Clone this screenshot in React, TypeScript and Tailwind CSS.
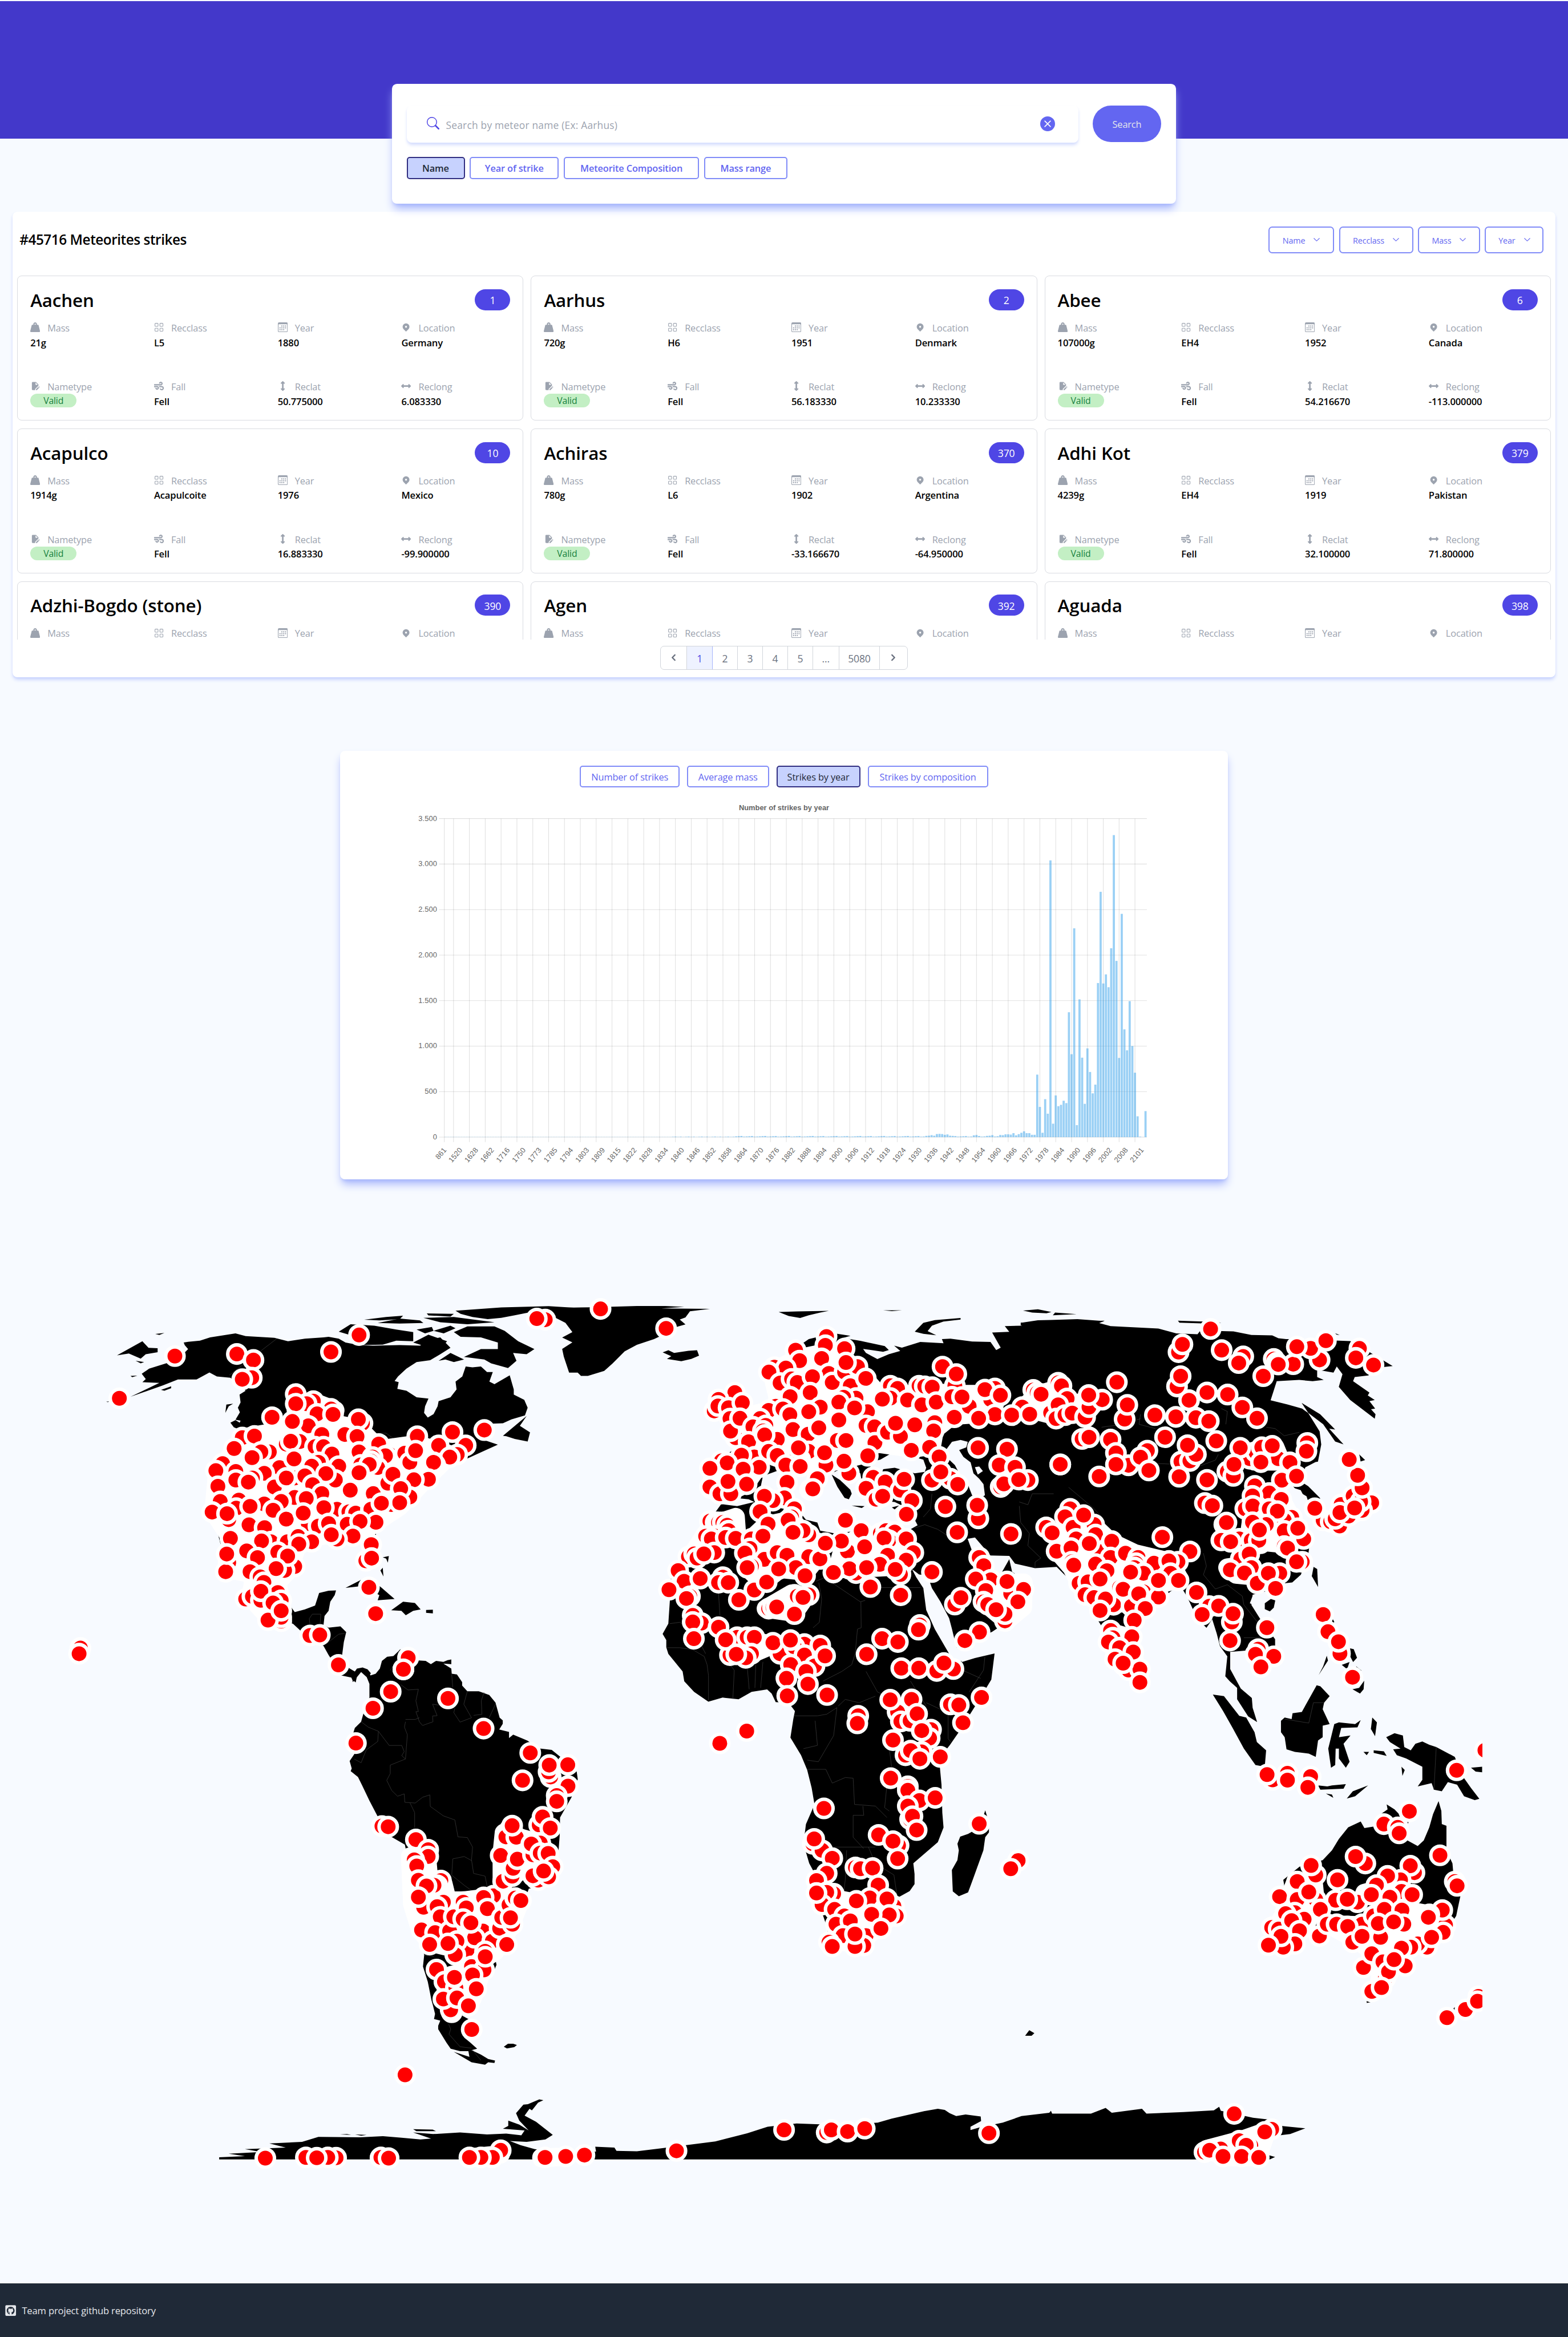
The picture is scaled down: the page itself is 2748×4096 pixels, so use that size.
import React from "react";
import { BsCalendar3, BsGrid, BsSearch, BsXCircleFill } from "react-icons/bs";
import { FaArrowsAltH, FaArrowsAltV, FaGithubSquare, FaWeightHanging, FaWind } from "react-icons/fa";
import { HiChevronLeft, HiChevronRight, HiLocationMarker } from "react-icons/hi";
import { MdEditDocument } from "react-icons/md";

// name, id, mass, class, year, country, latitude, longitude
const STRIKES: string[][] = [
  ["Aachen", "1", "21g", "L5", "1880", "Germany", "50.775000", "6.083330"],
  ["Aarhus", "2", "720g", "H6", "1951", "Denmark", "56.183330", "10.233330"],
  ["Abee", "6", "107000g", "EH4", "1952", "Canada", "54.216670", "-113.000000"],
  ["Acapulco", "10", "1914g", "Acapulcoite", "1976", "Mexico", "16.883330", "-99.900000"],
  ["Achiras", "370", "780g", "L6", "1902", "Argentina", "-33.166670", "-64.950000"],
  ["Adhi Kot", "379", "4239g", "EH4", "1919", "Pakistan", "32.100000", "71.800000"],
  ["Adzhi-Bogdo (stone)", "390"],
  ["Agen", "392"],
  ["Aguada", "398"],
];

function Field({ icon, label, children }: { icon: React.ReactNode; label: string; children?: React.ReactNode }) {
  return (
    <div className="h-[103px]">
      <div className="flex h-[25.8px] items-center text-[16.4px] text-[#9ca3af]">
        <span className="-mt-[3px] flex w-[30px] text-[17.2px]">{icon}</span>
        {label}
      </div>
      {children && (
        <div className="flex h-[25.8px] items-center text-[16.6px] font-semibold text-black">{children}</div>
      )}
    </div>
  );
}

function StrikeCard({ strike }: { strike: string[] }) {
  const [name, id, mass, recclass, year, country, lat, long] = strike;
  return (
    <div className="h-[254px] overflow-hidden rounded-[8px] border border-[#d9dbe1] bg-white px-[22px] pt-[21.5px]">
      <div className="flex items-start justify-between">
        <h2 className="text-[31.4px] font-semibold leading-[40px] tracking-[-0.005em] text-black">{name}</h2>
        <span className="mt-px flex h-[37px] w-[62px] items-center justify-center rounded-full bg-[#4f46e5] pt-[2px] text-[17.6px] text-white">
          {id}
        </span>
      </div>
      <div className="mt-[16.5px] grid grid-cols-4 gap-x-[25.8px]">
        <Field icon={<FaWeightHanging />} label="Mass">{mass}</Field>
        <Field icon={<BsGrid />} label="Recclass">{recclass}</Field>
        <Field icon={<BsCalendar3 />} label="Year">{year}</Field>
        <Field icon={<HiLocationMarker />} label="Location">{country}</Field>
        {mass && (
          <>
            <Field icon={<MdEditDocument />} label="Nametype">
              <span className="-mt-[4px] flex h-[23.6px] w-[81px] items-center justify-center rounded-full bg-[#c3efc4] pt-[2px] text-[15.8px] font-medium text-[#15803d]">
                Valid
              </span>
            </Field>
            <Field icon={<FaWind />} label="Fall">Fell</Field>
            <Field icon={<FaArrowsAltV />} label="Reclat">{lat}</Field>
            <Field icon={<FaArrowsAltH />} label="Reclong">{long}</Field>
          </>
        )}
      </div>
    </div>
  );
}

function SortButton({ label, className }: { label: string; className: string }) {
  return (
    <button
      className={`flex h-[47px] items-center justify-center gap-[15px] rounded-[6.5px] border-2 border-[#818cf8] pt-[2px] text-[14.4px] text-[#6366f1] ${className}`}
    >
      {label}
      <svg className="-mt-[2px] h-[6px] w-[11px]" viewBox="0 0 11 6" fill="none" stroke="currentColor" strokeWidth="1.1">
        <path d="M0.5 0.5 5.5 5.3 10.5 0.5" />
      </svg>
    </button>
  );
}

/* ------------------------------ chart ------------------------------ */

const PLOT = { left: 1088, right: 2808.7, top: 2004.8, bottom: 2785.2 };
const BAR_COUNT = 266;
const BAR_STEP = (PLOT.right - PLOT.left) / BAR_COUNT;

const RECENT = [
  10, 24, 22, 31, 31, 28, 44, 20, 33, 48, 64, 44, 44, 26, 26, 687, 332, 48, 417, 258, 3040, 148, 458, 340, 355, 400,
  374, 1372, 911, 2294, 132, 1514, 873, 366, 975, 716, 481, 577, 1693, 2695, 1688, 1788, 1647, 2075, 3318, 1936, 870,
  2453, 1184, 954, 1494, 1001, 708, 229, 5, 1, 286,
];
const BUMP: Record<number, number> = {
  182: 14, 183: 16, 184: 22, 185: 16, 186: 34, 187: 36, 188: 34, 189: 26, 190: 30, 191: 16, 192: 14, 193: 12,
  200: 20, 201: 24, 205: 14, 206: 16, 207: 22,
};
const COUNTS = Array.from({ length: BAR_COUNT }, (_, i) => {
  const recent = i - (BAR_COUNT - RECENT.length);
  if (recent >= 0) return RECENT[recent];
  if (BUMP[i]) return BUMP[i];
  if (i < 85) return 2;
  return i < 110 ? 2 + ((i * 7) % 5) : 5 + ((i * 11) % 9);
});

const YEARS = [
  861, 1520, 1628, 1662, 1716, 1750, 1773, 1785, 1794, 1803, 1809, 1815,
  ...Array.from({ length: 32 }, (_, i) => 1822 + i * 6),
  2101,
];
const Y_TICKS = ["0", "500", "1.000", "1.500", "2.000", "2.500", "3.000", "3.500"];

function StrikesChart() {
  const yOf = (v: number) => PLOT.bottom - (v / 3500) * (PLOT.bottom - PLOT.top);
  const tickOf = (i: number) => PLOT.left + BAR_STEP * (6 * i + 0.5);
  return (
    <svg className="mt-[18.4px] h-[666px] w-[1288px]" viewBox="1020 1955 1800 930" preserveAspectRatio="xMinYMin meet">
      <text x="1920" y="1984.5" textAnchor="middle" fontSize="18" fontWeight="700" fill="#666" letterSpacing="0" fontFamily="Liberation Sans, sans-serif">
        Number of strikes by year
      </text>
      <g stroke="#000" strokeOpacity="0.12" strokeWidth="1.5">
        {Y_TICKS.map((t, i) => (
          <line key={t} x1={PLOT.left - 13} x2={PLOT.right} y1={yOf(i * 500)} y2={yOf(i * 500)} />
        ))}
        <line x1={PLOT.left} x2={PLOT.left} y1={PLOT.top} y2={PLOT.bottom + 12} />
        {YEARS.slice(1).map((year, i) => {
          const x = (tickOf(i) + tickOf(i + 1)) / 2;
          return <line key={year} x1={x} x2={x} y1={PLOT.top} y2={PLOT.bottom + 12} />;
        })}
      </g>
      <g fill="rgb(54,162,235)" fillOpacity="0.5">
        {COUNTS.map((v, i) => (
          <rect key={i} x={PLOT.left + BAR_STEP * i + 0.6} width={BAR_STEP - 1.2} y={yOf(v)} height={PLOT.bottom - yOf(v)} />
        ))}
      </g>
      <g fontSize="18" fill="#666" fontFamily="Liberation Sans, sans-serif" letterSpacing="0.2" textAnchor="end">
        {Y_TICKS.map((t, i) => (
          <text key={t} x="1070.5" y={yOf(i * 500) + 5.5}>{t}</text>
        ))}
        {YEARS.map((year, i) => (
          <text key={year} transform={`translate(${tickOf(i) + 3} ${PLOT.bottom + 32}) rotate(-50)`}>{year}</text>
        ))}
      </g>
    </svg>
  );
}

/* ------------------------------- map ------------------------------- */

const SEA = "#f7faff";

// Each sector has its own local grid: origin plus units per pixel on both axes.
type Sector = { ox: number; oy: number; kx: number; ky: number; land?: string[]; sea?: string[]; top?: string[]; fields?: string[]; borders?: string[]; dots: string };

const SECTORS: Sector[] = [
  {
    // North and Central America
    ox: 150, oy: 3180, kx: 1.20615, ky: 1.568,
    land: [
      "165,219 240,165 258,190 285,192 285,207 250,215 235,232 200,212",
      "362,170 375,167 410,163 440,150 515,135 545,145 630,152 670,165 720,155 775,150 790,148 820,155 840,170 880,180 920,182 1000,180 1060,182 1085,160 1120,150 1150,190 1120,215 1090,238 1050,245 1020,270 995,300 985,318 997,322 993,348 1020,355 1050,380 1085,385 1075,415 1072,440 1083,458 1100,445 1112,415 1115,395 1150,380 1168,350 1165,320 1185,300 1195,262 1215,265 1240,262 1258,283 1275,283 1265,320 1280,330 1325,296 1337,350 1337,370 1368,390 1378,420 1370,450 1330,465 1305,480 1260,482 1225,500 1240,540 1290,562 1200,615 1150,640 1090,700 1040,760 1000,820 950,860 930,900 930,960 925,1000 905,990 890,930 860,905 800,910 740,930 700,960 690,1000 680,1060 655,1100 665,1160 690,1205 720,1195 750,1180 762,1132 790,1123 812,1122 808,1140 795,1165 790,1200 778,1220 775,1255 790,1265 825,1260 842,1282 835,1320 830,1370 850,1420 870,1435 890,1418 905,1425 915,1440 905,1455 890,1430 875,1445 870,1475 860,1465 855,1450 830,1445 810,1410 790,1370 775,1335 740,1310 710,1280 685,1250 640,1235 570,1205 540,1150 560,1100 520,1040 495,1010 470,940 460,890 430,820 432,760 450,690 470,640 520,560 535,530 520,500 530,470 515,466 528,438 522,420 530,400 527,370 545,355 500,305 460,300 438,285 400,312 362,312 345,312 300,335 205,378 250,350 290,325 240,322 250,310 238,290 260,270 310,250 345,235 360,215 375,195 365,180",
      "820,128 855,100 925,105 990,120 1040,130 1040,165 990,163 950,178 880,180 850,140",
      "895,82 960,72 1010,67 1000,80 940,85", "935,95 1000,78 1060,85 1070,95 1000,97",
      "1080,58 1160,60 1150,70 1085,66", "1070,75 1160,72 1280,92 1200,100 1120,92",
      "1165,48 1300,35 1440,30 1540,38 1440,50 1380,55 1340,65 1300,75 1260,80 1215,72 1180,60",
      "1160,130 1200,108 1280,108 1310,125 1350,165 1398,195 1375,215 1335,210 1345,240 1320,268 1270,250 1250,235 1190,225 1240,195 1290,195 1290,170 1240,150 1180,148",
      "1050,120 1095,110 1100,125 1075,135", "1040,170 1085,140 1140,165 1120,195 1090,190", "1100,125 1150,105 1165,115 1130,135",
      "1115,240 1150,210 1190,235 1160,245 1135,235",
      "1305,528 1375,452 1355,490 1385,515 1378,550 1340,540 1315,530",
      "840,1112 885,1082 920,1085 945,1110 985,1155 935,1160 940,1140 890,1105",
      "975,1198 1010,1165 1045,1170 1062,1195 1040,1200 1018,1217 1005,1200", "1078,1197 1098,1196 1098,1210 1078,1208",
      "943,1045 950,1035 952,1068", "950,995 968,990 965,1015 960,1000",
      "485,440 488,408 508,405 495,415", "500,478 515,468 530,480 528,505 510,495", "205,298 225,297 210,303",
      "220,240 245,245 235,250", "278,137 305,133 290,141", "295,352 325,338 325,345 305,355", "133,397 142,396 138,399",
    ],
    fields: [
      "535,535 690,500 800,480 880,500 940,580 1050,560 1150,600 1080,690 1000,800 930,860 900,890 860,905 800,905 740,920 700,940 675,1040 640,1090 650,1220 610,1220 560,1150 570,1060 490,1040 500,920 450,820 460,680",
      "690,400 750,400 810,430 800,480 700,500",
    ],
    borders: ["497,295 637,155", "735,1255 733,1230 742,1213 767,1213 765,1250", "785,1325 820,1290 838,1287", "912,518 960,518 988,545 990,555", "975,1430 1000,1350"],
    dots: "336,222 519,214 568,237 797,206 880,141 563,305 535,311 1430,82 1405,78 172,384 693,368 745,395 725,405 693,405 623,457 797,425 756,444 803,446 730,490 683,473 890,480 878,465 535,535 571,529 665,560 705,550 678,549 770,523 838,523 874,531 1052,530 1156,514 1250,506 511,577 615,590 590,590 564,612 477,635 457,662 750,570 775,570 880,590 800,598 938,560 970,600 958,605 1015,595 1115,565 1195,565 1170,600 1148,610 1030,630 1047,585 1105,640 1100,630 516,665 645,650 600,672 688,617 760,630 740,645 820,645 885,640 935,650 920,610 915,625 910,638 880,670 1085,695 1042,697 463,722 565,690 516,698 553,706 690,690 630,725 665,690 720,682 810,698 782,673 743,716 690,765 770,750 724,769 854,737 922,750 965,710 980,676 1030,763 1003,731 470,780 446,821 525,775 517,806 495,850 490,827 600,790 558,799 650,780 626,814 665,848 730,865 715,825 815,810 776,804 850,820 870,825 915,810 975,792 1000,785 946,787 555,870 601,881 760,875 790,865 845,868 930,860 883,857 500,922 620,935 592,932 668,935 700,915 740,935 702,944 862,913 815,925 798,908 916,946 900,1008 917,998 548,970 495,1015 486,1050 489,982 640,975 580,996 690,1030 660,1045 669,990 635,1038 558,1050 588,1070 599,1091 545,1155 565,1145 640,1130 590,1160 590,1125 650,1160 626,1170 650,1240 650,1225 611,1236 650,1200 735,1295 764,1293 909,1110 929,1211 819,1408 57,1343 53,1365 1025,1380 1011,1425",
  },
  {
    // Greenland and Antarctica, plus a few ocean finds
    ox: 0, oy: 0, kx: 1, ky: 1,
    land: [
      "1344,3204 1385,3203 1450,3202 1560,3199 1630,3199 1676,3201 1620,3205 1739,3206 1690,3212 1679,3227 1665,3232 1679,3244 1658,3250 1640,3262 1602,3280 1560,3294 1530,3310 1500,3340 1480,3358 1440,3370 1423,3370 1415,3362 1394,3362 1381,3323 1377,3304 1402,3288 1377,3276 1402,3263 1385,3240 1361,3228",
      "537,5289 537,5284 600,5281 560,5275 640,5271 600,5264 700,5260 660,5250 740,5246 780,5234 882,5235 938,5232 984,5236 1030,5240 1056,5238 1012,5223 1061,5227 1127,5223 1193,5228 1240,5226 1277,5230 1285,5218 1232,5214 1245,5207 1245,5194 1272,5204 1295,5218 1272,5194 1264,5176 1282,5155 1293,5154 1321,5142 1331,5144 1318,5150 1303,5169 1297,5165 1285,5182 1313,5197 1354,5229 1336,5240 1290,5246 1249,5244 1275,5254 1310,5264 1400,5273 1460,5270 1458,5258 1505,5260 1510,5268 1560,5269 1620,5262 1752,5245 1830,5225 1880,5209 1951,5201 2008,5203 2060,5205 2150,5199 2184,5189 2263,5171 2297,5165 2314,5168 2326,5176 2342,5183 2365,5179 2402,5184 2403,5195 2377,5209 2377,5217 2399,5211 2456,5199 2502,5183 2570,5175 2574,5170 2577,5177 2672,5177 2708,5163 2723,5175 2797,5165 2808,5177 2899,5173 2973,5169 2986,5160 2990,5170 3069,5187 3103,5191 3137,5207 3197,5213 3160,5227 3126,5231 3092,5255 3080,5271 3123,5283 3110,5289",
      "1012,5215 1060,5216 1068,5220 1020,5220", "833,5228 860,5229 850,5227", "870,5228 898,5229 885,5231",
    ],
    dots: "650,5286 1763,4270 1829,4240 1657,5268 1471,3206",
  },
  {
    // South America
    ox: 780, oy: 4000, kx: 1.96, ky: 1.20615,
    land: [
      "110,125 150,115 165,122 185,105 210,102 240,112 250,125 275,120 295,105 305,82 330,70 360,68 395,47 385,68 395,85 420,80 460,80 515,82 540,92 565,82 600,85 620,80 638,78 638,92 600,90 638,105 640,120 665,122 690,145 690,155 715,172 770,172 820,183 850,205 870,250 885,258 885,268 868,285 915,292 915,310 935,300 1005,318 1050,340 1120,345 1160,365 1210,380 1240,410 1245,432 1215,485 1160,545 1158,600 1150,665 1140,715 1080,745 1010,755 985,800 960,850 930,893 905,935 865,940 850,965 855,980 838,1005 820,1010 800,1050 765,1090 700,1120 690,1130 720,1140 720,1155 700,1170 700,1195 730,1210 762,1228 735,1232 780,1245 815,1258 848,1263 845,1270 815,1268 800,1275 735,1268 650,1237 725,1252 720,1235 680,1235 635,1228 615,1210 575,1170 575,1160 585,1145 555,1140 560,1125 550,1100 543,1085 525,1030 502,985 508,950 480,900 450,850 430,790 420,730 415,690 420,640 415,625 345,600 300,560 245,495 210,450 190,425 155,408 160,400 150,378 175,355 150,330 175,280 205,262 215,240 245,190 245,150 232,130 205,115 185,130 165,145 162,132",
      "890,1222 910,1213 935,1213 953,1217 940,1223 905,1227",
    ],
    fields: [
      "440,660 520,650 530,720 600,740 620,790 700,790 830,780 900,790 970,790 920,870 850,940 800,960 740,935 640,930 540,915 490,880 450,800",
      "890,590 1000,610 1090,640 1110,700 1040,730 1000,690 930,720 880,730 880,650",
      "640,1010 790,990 740,1080 640,1115 610,1060",
      "0,1549 85,1549 0,1551", "290,1549 337,1549 290,1551", "1070,1549 1187,1547 1070,1551", "725,1549 875,1540 730,1551",
    ],
    borders: [
      "345,110 385,70", "395,152 430,168 480,166 468,200 480,232 468,232 485,262 500,273 550,262 548,245 570,244 548,210 580,213", "418,255 465,255 485,250", "418,262 413,278 427,300 418,372 345,390 345,415 328,435 352,465 380,482 412,475 415,500 465,502 500,485 535,478 537,512 600,540 655,552 670,602 715,604 740,632 735,670 745,710 800,718 810,748", "205,262 240,278 288,290 340,332 400,332 412,350 400,362 418,372", "288,290 285,320 230,345 205,383 172,372", "440,502 462,530 462,575", "640,715 645,667 700,660 735,672", "640,715 700,745 745,765", "640,122 645,160", "715,172 698,210 735,250 680,263 650,235 655,222", "795,175 782,200 785,240 745,243", "850,210 820,250",
      "625,1155 635,1170 627,1185 680,1222 735,1226", "740,1232 780,1262", "510,952 555,955",
    ],
    dots: "622,193 793,282 347,173 262,222 431,73 408,107 180,325 1017,354 980,435 1115,425 1105,410 1108,390 1197,389 1198,452 1144,480 1144,497 1060,567 1076,543 1113,576 305,570 335,572 468,610 527,640 527,660 460,670 472,688 480,730 588,731 570,745 555,745 519,747 505,810 480,780 600,795 570,808 585,838 495,877 560,885 630,880 650,838 695,795 710,812 695,845 840,776 793,781 811,814 790,880 730,935 715,935 750,900 732,856 665,910 657,950 622,917 534,920 835,910 870,872 880,840 915,803 945,783 972,790 932,860 922,841 904,920 735,985 795,995 800,940 801,956 740,1010 567,994 605,1030 640,1120 635,1113 660,1048 653,1017 600,1081 665,1078 758,1051 720,1101 736,1171 416,1305 920,580 900,602 950,603 930,569 875,657 887,733 930,718 935,695 955,668 1065,620 1030,655 1022,623 1065,650 1103,651 1055,730 1030,717 1125,690 1105,720 1081,703 -60,1549 85,1550 45,1549 -8,1550 300,1549 337,1551 875,1528 835,1549 780,1549 725,1549 1088,1549 1187,1546 1277,1542",
  },
  {
    // Eurasia and Africa outline
    ox: 0, oy: 0, kx: 1, ky: 1,
    land: [
      "2542,3234 2500,3240 2503,3247 2461,3248 2472,3262 2430,3264 2451,3301 2440,3307 2426,3287 2381,3286 2328,3279 2307,3280 2311,3290 2254,3287 2209,3301 2190,3296 2205,3309 2177,3317 2149,3329 2121,3314 2114,3304 2163,3311 2177,3307 2167,3297 2107,3284 2065,3277 2083,3272 2051,3267 2023,3270 1981,3280 1942,3307 1925,3331 1869,3354 1890,3388 1911,3401 1897,3448 1841,3481 1841,3515 1791,3555 1740,3582 1730,3649 1770,3679 1763,3689 1714,3756 1676,3810 1630,3890 1641,3917 1637,3977 1623,4002 1632,4017 1632,4035 1637,4051 1672,4094 1676,4118 1700,4144 1735,4168 1770,4158 1809,4162 1841,4144 1879,4138 1890,4148 1900,4169 1932,4171 1947,4191 1943,4211 1936,4256 1962,4299 1977,4335 1988,4379 1995,4420 1974,4468 1968,4516 1982,4564 2008,4612 2011,4677 2027,4725 2030,4773 2104,4777 2161,4741 2201,4693 2197,4649 2228,4632 2240,4615 2240,4590 2237,4564 2297,4512 2311,4476 2308,4440 2306,4371 2300,4307 2326,4275 2348,4243 2399,4162 2428,4114 2436,4050 2388,4061 2356,4071 2342,4037 2430,3997 2470,3970 2503,3923 2521,3876 2479,3850 2472,3819 2451,3856 2420,3850 2381,3799 2370,3769 2388,3766 2426,3810 2472,3811 2486,3830 2535,3841 2588,3838 2610,3860 2636,3881 2661,3924 2698,3983 2713,4036 2727,4085 2764,4106 2790,4120 2801,4064 2770,4008 2771,3959 2808,3945 2852,3910 2889,3881 2907,3910 2933,3966 2955,3987 2969,3966 2980,4001 2988,4032 3006,4057 3001,4106 3012,4118 3030,4134 3030,4162 3057,4204 3079,4218 3068,4183 3066,4159 3039,4136 3013,4088 3013,4046 3050,4043 3079,4085 3123,4057 3123,4015 3087,3966 3065,3931 3068,3906 3110,3895 3145,3878 3165,3876 3186,3857 3204,3811 3208,3776 3182,3727 3138,3664 3116,3629 3150,3620 3175,3650 3200,3665 3208,3690 3233,3699 3233,3669 3204,3640 3185,3628 3197,3594 3222,3581 3228,3580 3236,3538 3232,3506 3204,3461 3189,3450 3153,3440 3112,3430 3127,3383 3182,3380 3215,3383 3242,3380 3226,3373 3226,3355 3266,3362 3274,3347 3288,3366 3279,3397 3307,3429 3367,3475 3369,3464 3358,3452 3368,3450 3354,3432 3367,3429 3350,3418 3354,3411 3314,3383 3318,3373 3351,3369 3391,3348 3411,3346 3351,3310 3307,3285 3233,3282 3150,3280 3131,3278 3116,3271 3065,3270 3021,3261 2940,3259 2933,3268 2881,3266 2837,3254 2720,3248 2690,3240 2705,3236 2639,3231 2573,3233",
    ],
    dots: "",
  },
  {
    // Europe, North Africa and the Middle East
    ox: 1560, oy: 3180, kx: 1.42545, ky: 1.49333,
    land: [
      "90,198 110,190 130,200 180,192 210,190 217,210 190,222 155,230 105,222 120,212", "495,50 560,48 670,46 640,52 600,62 570,72 530,65",
      "860,44 925,44 890,47", "970,122 1000,90 1040,80 1130,72 1130,78 1070,85 1030,100 1015,120 1045,135 1000,130",
      "1348,45 1400,40 1447,50 1430,55 1380,52", "1452,62 1460,52 1535,58",
    ],
    sea: [
      "430,700 440,650 520,620 620,600 680,640 720,620 780,640 790,700 840,740 900,745 930,760 960,790 980,830 930,860 860,860 780,850 690,860 640,850 630,820 590,810 560,770 470,740 430,760",
      "810,600 850,590 900,560 930,570 1000,590 1010,620 1005,635 970,640 900,620 860,625 855,640 820,630",
      "1075,560 1100,525 1130,518 1155,525 1150,545 1125,555 1140,580 1165,600 1175,640 1195,660 1210,680 1215,720 1190,740 1170,720 1155,680 1130,650 1110,610 1090,590",
      "1180,618 1195,615 1208,632 1190,645",
      "960,990 985,1010 1015,1015 1030,1060 1060,1110 1090,1170 1100,1210 1115,1275 1145,1325 1105,1330 1090,1300 1040,1210 1010,1140 1000,1060 975,1020",
      "340,730 390,735 410,745 350,760 290,752",
    ],
    top: ["680,645 710,665 745,700 750,715 740,735 725,730 700,690", "750,758 795,760 785,767", "890,765 915,758 900,772"],
    fields: [
      "470,270 560,220 650,200 730,240 800,300 860,370 1000,340 1110,350 1260,350 1240,420 1100,430 1040,480 1030,540 960,550 830,530 800,570 720,590 640,610 560,610 480,580 350,500 350,440 500,400",
      "260,830 345,800 350,870 300,880 180,950 190,940",
      "450,830 540,810 590,870 650,900 620,960 590,1000 500,990 440,1040 400,1000 400,880",
      "720,910 780,870 900,860 940,900 930,980 750,990 700,990",
      "1300,1040 1350,1040 1348,1130 1290,1180 1210,1110 1230,1040",
      "270,620 370,590 420,620 380,680 320,710 255,700",
      "330,1250 400,1250 480,1270 640,1280 620,1340 540,1310 470,1270 380,1310",
      "1350,400 1400,350 1480,330 1500,400 1460,430", "450,1135 550,1150 590,1090 540,1080",
    ],
    borders: [
      "625,1035 655,1022 780,1110 797,1105", "635,1040 645,1100 637,1185 615,1205", "782,1110 783,1205 770,1210 762,1300 750,1340 715,1365 650,1400", "850,1058 990,1058", "285,1080 290,1160", "103,1278 150,1278 195,1285 235,1310 245,1340 250,1380 250,1470", "325,1340 340,1360 335,1465", "385,1345 392,1430", "415,1340 412,1425", "440,1330 432,1425",
      "970,840 1005,828 1050,845 1110,885", "1000,800 1025,770 1030,715", "1335,760 1340,820 1370,860 1365,905 1410,950 1390,965 1390,985", "1215,300 1215,335", "1335,745 1365,755 1380,715 1455,715", "1215,1310 1210,1360 1160,1440", "1115,1350 1200,1390", "800,1365 840,1440 860,1450", "955,1400 985,1450 1010,1490",
      "115,1190 150,1185 200,1220 240,1300",
    ],
    dots: "102,110 662,140 658,172 554,190 645,220 568,228 725,184 480,252 520,255 461,270 500,310 540,295 560,308 670,275 613,287 682,308 725,270 770,250 730,235 745,320 799,293 342,345 270,412 285,370 283,394 320,400 368,382 325,440 345,510 327,486 360,439 535,360 605,345 765,365 722,362 705,380 640,398 805,415 760,401 485,395 460,410 510,405 600,415 534,426 430,440 405,470 390,525 450,465 440,485 490,516 446,500 545,480 598,497 635,474 700,520 730,520 705,445 800,465 830,470 831,528 885,320 910,330 885,365 857,369 945,372 995,390 985,320 1005,322 1031,325 1045,380 875,490 920,505 903,457 970,463 1040,455 1036,485 1022,545 958,556 1067,250 1110,320 1115,277 1100,360 1160,395 1135,361 1108,435 1250,330 1235,370 1215,334 1250,425 1269,355 1193,439 1191,547 1292,552 1478,608 1265,610 1320,618 1365,665 1270,690 1281,679 1333,663 410,580 365,574 460,560 600,560 570,590 490,575 560,575 564,547 520,610 570,615 660,610 655,565 740,640 723,596 806,576 295,595 315,602 255,622 427,618 371,625 255,690 290,715 328,715 383,680 318,670 630,660 605,700 614,697 524,673 825,655 800,695 867,672 920,702 933,662 835,735 858,724 1055,580 1030,665 1095,660 1061,635 1120,681 960,740 941,790 1077,762 1192,805 1188,757 1118,856 1306,862 515,730 475,740 445,724 550,770 430,780 458,826 540,800 528,812 255,815 275,820 285,820 300,820 315,830 240,870 275,870 260,880 320,850 310,875 345,878 180,945 200,935 210,950 270,930 234,935 144,996 165,1035 112,1066 221,1025 185,1090 173,1098 400,880 440,870 395,915 377,932 445,955 400,980 385,985 300,1020 285,1040 319,1040 410,1067 453,1038 356,1103 600,865 580,850 545,856 490,930 600,945 524,940 639,953 555,985 495,990 587,1015 735,925 714,888 658,896 783,850 850,860 870,850 900,855 880,885 863,877 795,909 940,880 965,930 940,958 875,940 848,973 765,1005 742,989 802,985 686,1003 920,1010 902,992 815,1056 921,1086 728,812 460,1135 475,1130 488,1129 550,1085 560,1090 600,1085 550,1155 580,1094 195,1160 225,1188 195,1184 199,1245 285,1203 325,1305 350,1240 310,1249 385,1240 410,1240 400,1300 380,1315 347,1302 500,1300 475,1260 585,1265 550,1275 536,1250 585,1305 640,1270 620,1345 657,1308 537,1340 522,1390 590,1365 597,1411 525,1454 664,1451 802,1302 856,1245 911,1257 988,1195 983,1212 923,1353 984,1353 1047,1363 1105,1356 1072,1334 1196,1221 1145,1252 1030,1001 1195,948 1211,978 1235,1030 1183,1027 1110,1120 1131,1095 1218,1069 1210,1110 1225,1120 1305,1080 1292,1036 1350,1065 1330,1110 1285,1180 1285,1155 1254,1139",
  },
  {
    // Asia
    ox: 2500, oy: 3180, kx: 1.36348, ky: 1.42545,
    land: [
      "525,78 640,82 670,85 620,88 530,85", "1050,122 1065,128 1055,127", "0,85 280,78 250,92 0,95",
      "938,365 1000,405 1050,458 1030,455 1078,510 1050,500 1010,440 960,400", "1130,545 1150,565 1135,570",
      "978,938 990,945 993,1008 972,970", "815,1065 835,1050 850,1055 845,1080 832,1093 815,1085",
      "1100,1222 1112,1225 1123,1255 1110,1270 1100,1250", "1072,1280 1098,1270 1090,1295", "1108,1365 1130,1360 1147,1335 1145,1365 1133,1380",
      "1022,1248 1026,1265 995,1315 1010,1285", "1120,1285 1138,1300 1125,1300", "1040,1115 1047,1130 1040,1140", "1060,735 1150,700 1150,745 1080,775 1020,790",
    ],
    sea: ["865,650 905,640 905,660 935,670 955,710 965,740 905,700", "765,1065 775,1038 810,1030 800,1080"],
    fields: [
      "165,750 220,770 300,850 380,890 500,920 530,980 460,1000 410,1070 370,1070 310,1060 215,1035 170,940 120,880",
      "300,1165 365,1185 375,1240 390,1300 340,1285 315,1250",
      "740,540 850,520 870,570 780,570", "780,670 870,700 900,760 930,810 900,860 800,850 760,845 770,770",
      "1070,740 1150,720 1120,750 1060,780", "60,340 130,310 170,370 260,350 220,400 130,410 100,380", "690,940 760,930 770,970 720,965",
    ],
    borders: ["270,450 345,440 400,420", "400,405 395,440 450,455", "410,575 530,580 600,585 650,565 660,545", "670,385 690,395 685,440", "820,450 850,455 880,480 930,468", "160,660 240,730 268,760", "610,890 620,935 610,965 650,1015 690,1000 740,1040 745,1070 790,1130 800,1185 745,1185", "460,880 445,880"],
    dots: "634,107 671,181 743,203 728,226 527,188 540,161 522,308 534,272 562,356 622,329 691,336 740,381 789,419 448,408 518,414 585,417 628,429 321,293 347,422 356,372 845,212 855,225 910,230 860,231 810,272 998,215 968,175 922,169 1019,148 1131,175 1119,208 1178,233 5,380 -30,408 30,405 42,320 55,330 68,335 125,295 136,306 155,350 100,400 125,372 118,420 148,408 172,401 215,415 228,380 272,354 227,338 205,491 228,485 300,493 482,485 653,498 132,580 318,540 360,583 318,580 262,622 423,532 400,555 428,601 535,570 565,568 585,545 557,513 529,623 622,634 473,834 565,884 615,715 640,724 765,560 785,537 805,520 733,522 860,560 840,515 802,572 957,505 954,534 899,573 872,635 921,621 690,605 710,620 712,580 782,655 830,680 774,690 870,702 750,735 775,725 830,735 905,765 880,775 857,743 680,790 687,783 820,790 774,782 670,845 730,840 701,850 770,845 800,855 795,845 797,809 945,840 880,812 925,803 880,865 891,872 735,910 763,893 940,920 921,920 700,948 770,940 747,959 865,960 790,995 827,960 851,1013 1010,775 982,733 1070,720 1035,780 1065,795 1050,770 1095,760 1066,748 1110,690 1172,714 1140,740 1135,710 1115,732 1140,662 1125,618 1097,563 85,800 105,819 165,735 148,763 175,800 245,790 210,757 185,840 250,825 270,885 229,856 304,848 120,883 168,872 300,905 350,890 170,920 177,932 250,928 392,905 385,925 380,940 445,925 525,920 495,917 288,951 410,960 367,956 500,960 527,985 195,995 225,990 265,980 215,1035 245,1045 310,1070 283,1050 330,1010 342,1016 410,1025 370,1075 460,1043 460,985 394,1032 416,1083 265,1090 379,1124 300,1160 308,1185 293,1200 371,1182 330,1220 376,1235 315,1260 360,1298 398,1295 342,1274 398,1341 587,1027 630,1075 606,1104 661,1074 705,1130 709,1101 699,1195 822,1150 793,1225 784,1243 845,1250 802,1287 1010,1104 1026,1164 1066,1240 1061,1199 1108,1323",
  },
  {
    // Southern Africa, Indonesia and Australia
    ox: 1900, oy: 4050, kx: 0.8809, ky: 1.24444,
    land: [
      "452,478 460,515 460,545 452,560 448,600 425,690 415,728 395,740 382,725 380,660 392,630 395,600 392,580 398,558 415,550 440,530",
      "943,125 967,130 1000,190 1015,195 1033,240 1038,270 1058,295 1055,345 1035,340 1010,290 985,225 965,175",
      "1090,205 1098,195 1113,200 1115,182 1135,178 1150,140 1167,97 1175,100 1195,130 1183,150 1180,170 1195,215 1180,220 1180,255 1170,265 1165,315 1150,305 1120,300 1102,292 1098,255 1090,240",
      "1192,290 1205,215 1215,210 1250,215 1262,203 1255,225 1220,227 1215,255 1240,250 1225,275 1238,330 1230,348 1215,320 1215,290 1208,290 1207,340 1198,348",
      "1287,195 1297,210 1293,252 1284,230",
      "1317,255 1335,243 1353,250 1356,285 1370,295 1380,275 1395,268 1410,278 1425,285 1465,315 1480,370 1500,410 1518,443 1508,447 1485,435 1470,400 1450,392 1437,420 1420,415 1415,395 1385,405 1395,385 1395,345 1360,320 1340,310 1332,292 1348,290 1325,270",
      "1500,348 1524,345 1524,362 1510,360", "1290,295 1312,298 1318,312 1290,303", "1268,300 1280,300 1275,310", "1350,345 1357,355 1352,373",
      "1232,442 1245,420 1278,402 1250,435", "1170,402 1190,405 1200,402 1230,398 1225,412 1175,415", "1187,427 1200,430 1203,440",
      "1430,450 1436,480 1437,520 1447,525 1447,600 1460,640 1463,690 1477,740 1468,800 1440,860 1410,900 1350,940 1320,960 1290,930 1270,890 1240,860 1200,830 1140,860 1080,890 1060,890 1090,830 1075,790 1100,730 1095,690 1130,650 1180,630 1200,600 1215,565 1235,530 1262,512 1270,532 1300,525 1305,490 1320,475 1318,460 1335,475 1345,490 1370,500 1350,560 1385,587 1398,570 1410,530 1418,490",
      "547,1148 558,1157 552,1165 538,1165", "1275,1058 1283,1063 1275,1065", "1462,1082 1466,1077 1466,1088",
    ],
    fields: [
      "100,740 175,760 240,760 250,800 225,830 180,880 130,880 150,820",
      "1120,700 1160,690 1165,760 1140,840 1080,870 1085,830",
      "1190,825 1290,830 1295,790 1350,780 1430,800 1430,850 1350,890 1320,980 1300,1020 1310,930 1250,870",
      "930,1510 1010,1480 1060,1455 1040,1535 970,1535", "1270,730 1350,700 1320,750",
    ],
    borders: [
      "40,190 90,190 110,185 132,165 125,250 92,330 68,325", "85,205 90,280 60,290", "68,353 108,353 122,395 150,378 167,380 170,460 215,465 240,500", "167,493 190,493 188,465", "167,493 167,560 190,595", "128,590 215,590", "153,600 150,690 145,750", "200,590 215,640 255,675 262,740", "240,400 235,470 245,480", "372,180 372,260 378,270", "325,150 355,170", "245,290 250,345", "1425,285 1420,415", "1098,200 1150,212 1160,150 1183,150", "75,50 45,10", "135,160 150,140 180,150 215,130",
    ],
    dots: "178,190 176,213 263,178 247,141 293,140 270,207 290,205 305,184 335,232 332,258 315,235 253,264 280,310 315,300 291,296 311,321 355,315 248,380 285,405 285,417 310,448 344,440 285,465 290,505 295,496 304,538 104,472 439,519 523,631 507,656 80,580 100,600 83,565 122,624 110,670 88,692 222,553 265,585 253,572 263,625 172,652 183,656 209,654 221,706 125,732 110,728 100,765 88,730 127,780 203,745 174,754 255,770 240,748 148,800 130,825 161,815 260,800 245,797 207,795 195,860 227,838 145,860 115,880 190,890 171,893 171,855 122,893 377,155 395,157 404,211 444,134 1072,385 1060,369 1104,365 1104,386 1154,375 1148,408 1469,356 1530,295 1367,481 1312,520 1342,530 1345,548 1272,640 1251,619 1165,675 1155,646 1125,695 1212,690 1433,615 1378,668 1369,647 1348,690 1320,678 1296,706 1465,695 1470,708 1087,741 1125,750 1165,750 1150,727 1208,752 1255,758 1233,749 1285,735 1350,725 1325,743 1373,735 1120,790 1100,793 1140,810 1175,780 1070,835 1085,840 1113,814 1130,845 1120,885 1095,895 1090,862 1063,889 1173,861 1190,825 1210,825 1265,825 1234,832 1245,880 1265,862 1305,865 1290,800 1313,780 1351,782 1300,823 1355,825 1333,818 1445,828 1438,782 1410,795 1408,804 1440,850 1405,895 1385,885 1370,895 1350,898 1415,865 1268,957 1286,915 1310,940 1358,952 1315,990 1322,970 1334,933 1286,1030 1307,1018 1488,1085 1516,1045 1514,1060 1448,1110 18,1452 110,1460 120,1452 155,1457 192,1448 460,1462 989,1403 1070,1450 1055,1458 1000,1485 1025,1500 1015,1499 960,1510 925,1520 936,1514 965,1533 1005,1533 1042,1536",
  },
];

function WorldMap() {
  const frame = (s: Sector) => `translate(${s.ox} ${s.oy}) scale(${1 / s.kx} ${1 / s.ky})`;
  return (
    <svg className="ml-[100.2px] mt-[187px] h-[1567.2px] w-[2497.5px] shrink-0" viewBox="140 3150 3490 2190">
      {SECTORS.map((s, n) => (
        <g key={n} transform={frame(s)}>
          {s.land?.map((p, i) => <polygon key={i} points={p} fill="#000" />)}
          {s.sea?.map((p, i) => <polygon key={i} points={p} fill={SEA} />)}
          {s.top?.map((p, i) => <polygon key={i} points={p} fill="#000" />)}
          {s.borders?.map((p, i) => (
            <polyline key={i} points={p} fill="none" stroke="#3a3a3a" strokeWidth="0.8" vectorEffect="non-scaling-stroke" />
          ))}
        </g>
      ))}
      {SECTORS.map((s, n) => (
        <g key={n} transform={frame(s)}>
          {s.fields?.map((p, i) => (
            <polygon key={i} points={p} fill="#fff" stroke="#fff" strokeWidth="32" strokeLinejoin="round" vectorEffect="non-scaling-stroke" />
          ))}
        </g>
      ))}
      <g fill="#f00" stroke="#fff" strokeWidth="8.5">
        {SECTORS.flatMap((s, n) =>
          s.dots.split(" ").filter(Boolean).map((pair, i) => {
            const [x, y] = pair.split(",").map(Number);
            return <circle key={`${n}-${i}`} cx={s.ox + x / s.kx} cy={s.oy + y / s.ky} r="22.4" />;
          }),
        )}
      </g>
    </svg>
  );
}

/* ------------------------------- page ------------------------------ */

const tabBase = "flex h-[38.6px] items-center justify-center rounded-[5px] border-2 pt-[2px]";
const tabIdle = "border-[#818cf8] text-[#6366f1]";
const tabActive = "border-[#312e81] bg-[#c7d2fe] text-[#1f2937]";
const pageCell = "flex h-full items-center justify-center border-r border-[#d1d5db]";

export default function App() {
  return (
    <div className="flex h-[4096px] w-[2748px] flex-col overflow-hidden bg-[#f7faff] font-['Open_Sans','Noto_Sans',sans-serif] tracking-[-0.01em]">
      <header className="mt-[2px] h-[240.6px] shrink-0 bg-[#4338ca]" />

      <section className="relative z-10 -mt-[96px] h-[210.4px] w-[1374px] shrink-0 self-center rounded-[8.6px] bg-white px-[25.5px] pt-[38px] shadow-[0_10.7px_16px_-3.2px_#a5b4fc,0_4.3px_6.4px_-4.3px_#a5b4fc]">
        <div className="flex items-center gap-[25.5px]">
          <div className="flex h-[65px] w-[1177px] items-center rounded-[8.6px] bg-white pl-[35px] pr-[40.5px] shadow-[0_4.3px_6.4px_-1px_#d6defe,0_2.1px_4.3px_-2.1px_#d6defe]">
            <BsSearch className="-mt-[3px] text-[22px] text-[#4f46e5]" />
            <span className="ml-[12px] mt-[4px] flex-1 text-[17.4px] tracking-[0.012em] text-[#9ca3af]">
              Search by meteor name (Ex: Aarhus)
            </span>
            <BsXCircleFill className="text-[26px] text-[#6366f1]" />
          </div>
          <button className="flex h-[64.4px] w-[120px] items-center justify-center rounded-full bg-[#6366f1] pt-[3px] text-[16.4px] text-gray-200">
            Search
          </button>
        </div>
        <div className="mt-[25.6px] flex gap-[8.8px] text-[16.4px] font-semibold">
          <button className={`${tabBase} ${tabActive} w-[102px]`}>Name</button>
          <button className={`${tabBase} ${tabIdle} w-[156px]`}>Year of strike</button>
          <button className={`${tabBase} ${tabIdle} w-[237px]`}>Meteorite Composition</button>
          <button className={`${tabBase} ${tabIdle} w-[146px]`}>Mass range</button>
        </div>
      </section>

      <section className="mx-[21.7px] mt-[14.4px] flex h-[815.7px] shrink-0 flex-col rounded-[8.6px] bg-white px-[8.5px] shadow-[0_4.3px_6.4px_-1px_#c7d2fe,0_2.1px_4.3px_-2.1px_#c7d2fe]">
        <div className="flex h-[112px] items-start justify-between pl-[4px] pr-[12.5px] pt-[25.5px]">
          <h1 className="mt-[5px] text-[24.4px] font-semibold leading-[36px] tracking-[-0.02em] text-black">
            #45716 Meteorites strikes
          </h1>
          <div className="flex gap-[8.4px]">
            <SortButton label="Name" className="w-[115px]" />
            <SortButton label="Recclass" className="w-[130px]" />
            <SortButton label="Mass" className="w-[109px]" />
            <SortButton label="Year" className="w-[103px]" />
          </div>
        </div>
        <div className="grid h-[638px] shrink-0 auto-rows-[254px] grid-cols-3 gap-x-[13px] gap-y-[13.7px] overflow-hidden">
          {STRIKES.map((s) => (
            <StrikeCard key={s[1]} strike={s} />
          ))}
        </div>
        <nav className="mt-[10.2px] flex h-[42.8px] w-[433.4px] self-center overflow-hidden rounded-[7px] border border-[#d1d5db] text-[17.6px] text-[#6b7280]">
          <span className={`${pageCell} w-[46px]`}><HiChevronLeft className="text-[23px]" /></span>
          <span className="-my-px flex w-[44.6px] items-center justify-center border border-l-0 border-[#a5b4fc] bg-[#eef2ff] pt-[2px] font-medium text-[#4f46e5]">1</span>
          <span className={`${pageCell} w-[44px] pt-[2px]`}>2</span>
          <span className={`${pageCell} w-[44px] pt-[2px]`}>3</span>
          <span className={`${pageCell} w-[44px] pt-[2px]`}>4</span>
          <span className={`${pageCell} w-[44px] pt-[2px]`}>5</span>
          <span className={`${pageCell} w-[45.8px] pt-[2px]`}>...</span>
          <span className={`${pageCell} w-[71.6px] pt-[2px]`}>5080</span>
          <span className="flex flex-1 items-center justify-center"><HiChevronRight className="text-[23px]" /></span>
        </nav>
      </section>

      <section className="mt-[129px] flex h-[751.4px] w-[1555.6px] shrink-0 flex-col self-center rounded-[8.6px] bg-white pt-[25.6px] shadow-[0_10.7px_16px_-3.2px_#a5b4fc,0_4.3px_6.4px_-4.3px_#a5b4fc]">
        <div className="flex justify-center gap-[13px] text-[16.4px]">
          <button className={`${tabBase} ${tabIdle} w-[174.6px]`}>Number of strikes</button>
          <button className={`${tabBase} ${tabIdle} w-[143.5px]`}>Average mass</button>
          <button className={`${tabBase} ${tabActive} w-[147px]`}>Strikes by year</button>
          <button className={`${tabBase} ${tabIdle} w-[211px]`}>Strikes by composition</button>
        </div>
        <div className="pl-[133.8px]">
          <StrikesChart />
        </div>
      </section>

      <WorldMap />

      <footer className="mt-auto flex h-[96px] shrink-0 items-center border-t-2 border-white bg-[#1f2937] pl-[8px] pt-[2px] text-gray-200">
        <FaGithubSquare className="mr-[9px] text-[21.4px]" />
        <span className="text-[16.6px]">Team project github repository</span>
      </footer>
    </div>
  );
}
